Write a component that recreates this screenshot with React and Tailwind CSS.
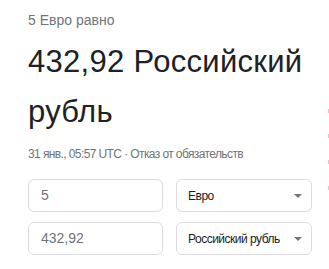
import React from "react";

function Caret() {
  return (
    <svg width="8" height="4" viewBox="0 0 8 4" className="shrink-0">
      <path d="M0 0 L8 0 L4 4 Z" fill="#757575" />
    </svg>
  );
}

function InputBox({ value }) {
  return (
    <div className="h-[33px] w-[135px] rounded-[6px] border border-[#dadce0] flex items-center pl-[12px] text-[14px] text-[#70757a]">
      {value}
    </div>
  );
}

function SelectBox({ label }) {
  return (
    <div className="h-[33px] w-[136px] rounded-[6px] border border-[#dadce0] flex items-center justify-between pl-[11px] pr-[9px]">
      <span className="text-[12px] tracking-[-0.5px] text-[#202124] whitespace-nowrap">{label}</span>
      <Caret />
    </div>
  );
}

export default function App() {
  return (
    <div
      className="relative w-[329px] h-[269px] overflow-hidden bg-white"
      style={{ fontFamily: '"Liberation Sans", Arial, sans-serif' }}
    >
      <div className="flex flex-col pl-[28px] pt-[10px]">
        <div className="text-[14px] leading-[20px] text-[#70757a]">5 Евро равно</div>
        <div className="mt-[7px] text-[31px] leading-[50px] tracking-[0.3px] text-[#202124] w-[295px]">
          432,92 Российский рубль
        </div>
        <div className="mt-[9px] text-[12px] leading-[16px] tracking-[-0.6px] text-[#70757a] whitespace-nowrap">
          31 янв., 05:57 UTC · Отказ от обязательств
        </div>
        <div className="mt-[17px] flex flex-col gap-[10px]">
          <div className="flex gap-[13px]">
            <InputBox value="5" />
            <SelectBox label="Евро" />
          </div>
          <div className="flex gap-[13px]">
            <InputBox value="432,92" />
            <SelectBox label="Российский рубль" />
          </div>
        </div>
      </div>
      <div className="absolute left-[328px] top-[109px] w-[1px] h-[4px] bg-[#ecc0d4]" />
      <div className="absolute left-[328px] top-[134px] w-[1px] h-[4px] bg-[#ecc0d4]" />
      <div className="absolute left-[328px] top-[160px] w-[1px] h-[4px] bg-[#ecc0d4]" />
      <div className="absolute left-[328px] top-[186px] w-[1px] h-[4px] bg-[#ecc0d4]" />
    </div>
  );
}
